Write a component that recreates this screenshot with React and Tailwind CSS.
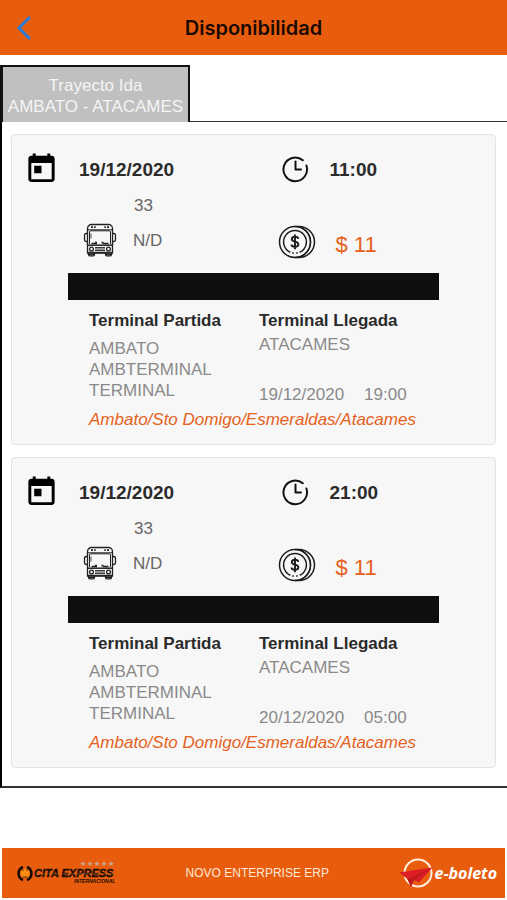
import React from "react";

const trips = [
  {
    id: 1,
    date: "19/12/2020",
    time: "11:00",
    seats: "33",
    bus: "N/D",
    price: "$ 11",
    from: "AMBATO AMBTERMINAL TERMINAL",
    to: "ATACAMES",
    arrivalDate: "19/12/2020",
    arrivalTime: "19:00",
    route: "Ambato/Sto Domigo/Esmeraldas/Atacames",
  },
  {
    id: 2,
    date: "19/12/2020",
    time: "21:00",
    seats: "33",
    bus: "N/D",
    price: "$ 11",
    from: "AMBATO AMBTERMINAL TERMINAL",
    to: "ATACAMES",
    arrivalDate: "20/12/2020",
    arrivalTime: "05:00",
    route: "Ambato/Sto Domigo/Esmeraldas/Atacames",
  },
];

function CalendarIcon() {
  return (
    <svg viewBox="0 0 24 24" className="h-[35px] w-[35px] shrink-0" fill="#000">
      <path d="M19 2.500h-1V1h-2v1.500H8V1H6v1.500H5c-1.100 0-2 .9-2 2V18.500c0 1.100.9 2 2 2h14c1.100 0 2-.9 2-2V4.500c0-1.100-.9-2-2-2zm0 16.200H5V7.500h14v11.200zM7 9.500h5v5H7z" />
    </svg>
  );
}

function ClockIcon() {
  return (
    <svg
      viewBox="0 0 28 28"
      className="h-7 w-7 shrink-0"
      fill="none"
      stroke="#111"
      strokeWidth="2"
      strokeLinecap="round"
    >
      <path d="M20.800 5.300A11.800 11.800 0 1 0 24.400 10.500" />
      <path d="M13.500 6.500v8H19" strokeLinejoin="round" />
    </svg>
  );
}

function BusIcon() {
  return (
    <svg
      viewBox="0 0 34 34"
      className="h-[34px] w-[34px] shrink-0"
      fill="none"
      stroke="#222"
      strokeWidth="1.300"
    >
      <path d="M4.500 30V5.500a4 4 0 0 1 4-4h17a4 4 0 0 1 4 4V30z" />
      <path d="M4.500 6.800h25M6.500 21V9q0-1.200 1.200-1.200h18.600q1.200 0 1.200 1.200v12" strokeWidth="1" />
      <path d="M8 4.200h2M11.200 4.200h1.500M21.300 4.200h1.500M24 4.200h2" strokeWidth="1.800" />
      <path d="M4.500 10.500H3.200q-1.700 0-1.700 1.700v4.600q0 1.700 1.700 1.700h1.300M29.500 10.500h1.300q1.700 0 1.700 1.700v4.600q0 1.700-1.700 1.700h-1.300" />
      <path d="M8 10.500v5" strokeWidth=".8" />
      <path d="M4.500 22.200h25" strokeWidth="1.500" />
      <path d="M8.500 20.500h5.500M12 19.600h2M18.500 19.600h2M20 20.500h5.500" strokeWidth="1.700" />
      <circle cx="8.500" cy="26" r="1.900" />
      <circle cx="25.500" cy="26" r="1.900" />
      <path d="M12 24.500h10M12 26h10M12 27.500h10" strokeWidth=".9" />
      <path d="M4.500 29.500h25" strokeWidth="1.500" />
      <path d="M5.500 30v1.500q0 1.300 1.300 1.300h3.400q1.300 0 1.300-1.300V30M22.500 30v1.500q0 1.300 1.300 1.300h3.400q1.300 0 1.300-1.300V30M6 31.300h5M23 31.300h5" />
    </svg>
  );
}

function CoinIcon() {
  return (
    <svg
      viewBox="0 0 38 34"
      className="h-[34px] w-[38px] shrink-0"
      fill="none"
      stroke="#1c1c1c"
      strokeWidth="1.500"
    >
      <circle cx="17" cy="17" r="15.500" />
      <path d="M12.300 27.300A11.400 11.400 0 1 1 21.700 27.300M14.200 28.100h1.600M18.200 28.100h1.600" />
      <path d="M17 1.500h4a15.500 15.500 0 0 1 0 31h-4" />
      <path d="M20 1.700a15.600 15.600 0 0 1 0 30.600" strokeWidth="1.300" />
      <path
        d="M20.300 13.800q-.3-2-3.300-2t-3.200 2.300q0 2 3.200 2.500t3.400 2.700q0 2.500-3.400 2.500t-3.500-2.300M17 9.500v14.700"
        strokeWidth="1.900"
      />
    </svg>
  );
}

function CitaExpressLogo() {
  return (
    <svg viewBox="0 0 99 28" className="h-7 w-[99px]" role="img" aria-label="Cita Express Internacional">
      <path d="M6 8a7 7 0 0 0 0 13M10 8a7 7 0 0 1 0 13" fill="none" stroke="#1a0d05" strokeWidth="2.600" />
      <circle cx="8" cy="14.500" r="4.600" fill="#fb8c12" />
      <path d="M5 10.500l1.500 1M11 10.500l-1.500 1M6 18h4" stroke="#3a1a08" strokeWidth="1" />
      <g fill="#cfa48c">
        <path d="M66 2l.8 1.700 1.900.2-1.400 1.300.4 1.900-1.700-1-1.700 1 .4-1.900-1.400-1.300 1.900-.2z" />
        <path d="M73 2l.8 1.700 1.900.2-1.400 1.300.4 1.900-1.700-1-1.700 1 .4-1.900-1.400-1.300 1.900-.2z" />
        <path d="M80 2l.8 1.700 1.900.2-1.400 1.300.4 1.900-1.700-1-1.700 1 .4-1.900-1.400-1.300 1.900-.2z" />
        <path d="M87 2l.8 1.700 1.900.2-1.400 1.300.4 1.900-1.700-1-1.700 1 .4-1.900-1.400-1.300 1.900-.2z" />
        <path d="M94 2l.8 1.700 1.900.2-1.400 1.300.4 1.900-1.700-1-1.700 1 .4-1.900-1.400-1.300 1.900-.2z" />
      </g>
      <text
        x="17"
        y="18"
        fontFamily="Liberation Sans, sans-serif"
        fontSize="11"
        fontWeight="bold"
        fontStyle="italic"
        fill="#1a0d05"
        stroke="#1a0d05"
        strokeWidth=".4"
      >
        CITA EXPRESS
      </text>
      <path d="M17 14.800h25M46 14.800h51" stroke="#c9703c" strokeWidth=".5" />
      <text
        x="57"
        y="24"
        fontFamily="Liberation Sans, sans-serif"
        fontSize="5"
        fontWeight="bold"
        fontStyle="italic"
        fill="#1a0d05"
      >
        INTERNACIONAL
      </text>
    </svg>
  );
}

function EBoletoLogo() {
  return (
    <div className="flex items-center">
      <svg viewBox="0 0 36 32" className="h-8 w-9">
        <circle cx="20" cy="16" r="13.500" fill="none" stroke="#fff0e0" strokeWidth="2" />
        <path d="M1 15.500L34.500 10.500 21 25.500l-5-2.500-3 7-3.500-8z" fill="#dc1f26" />
        <path d="M34.500 10.500L9.500 22l3.500 8 3-7z" fill="#c2181f" />
      </svg>
      <span className="font-['Open_Sans',sans-serif] text-[16px] leading-5 font-bold text-white italic">
        e-boleto
      </span>
    </div>
  );
}

function TripCard({ trip }) {
  return (
    <article className="rounded border border-[#e3e3e3] bg-[#f7f7f7] pt-4 pb-[14px]">
      <div className="grid grid-cols-2">
        <div className="flex h-9 items-center gap-5 pl-3 text-[19px] font-bold text-[#2b2b2b]">
          <CalendarIcon />
          <span>{trip.date}</span>
        </div>
        <div className="flex h-9 items-center gap-5 pl-7 text-[19px] font-bold text-[#2b2b2b]">
          <ClockIcon />
          <span>{trip.time}</span>
        </div>
        <div className="mt-2 pl-[122px] text-[#666]">{trip.seats}</div>
        <div className="col-start-1 mt-1.5 flex h-9 items-center gap-4 pl-[71px] text-[#666]">
          <BusIcon />
          <span>{trip.bus}</span>
        </div>
        <div className="mt-2 flex h-9 items-center gap-5 pl-6 text-[22px] text-[#e5611b]">
          <CoinIcon />
          <span className="pt-1">{trip.price}</span>
        </div>
      </div>

      <div className="mx-14 mt-[13px] h-[27px] bg-[#0e0e0e]" />

      <div className="mt-2.5 grid grid-cols-[170px_1fr] pl-[77px] text-[#8a8a8a]">
        <div>
          <h2 className="font-bold text-[#2b2b2b]">Terminal Partida</h2>
          <p className="mt-[7px] w-[130px]">{trip.from}</p>
        </div>
        <div className="flex flex-col">
          <h2 className="font-bold text-[#2b2b2b]">Terminal Llegada</h2>
          <p className="mt-[3px]">{trip.to}</p>
          <p className="mt-[29px] flex gap-5">
            <span>{trip.arrivalDate}</span>
            <span>{trip.arrivalTime}</span>
          </p>
        </div>
      </div>
      <p className="mt-1 pl-[77px] text-[#e5611b] italic">{trip.route}</p>
    </article>
  );
}

export default function App() {
  return (
    <div className="flex min-h-screen flex-col bg-white font-['Liberation_Sans',Arial,sans-serif] text-[17px] leading-[21px]">
      <header className="grid h-[55px] grid-cols-[60px_1fr_60px] items-center bg-[#e85c0d]">
        <button type="button" aria-label="Volver" className="pl-4">
          <svg
            viewBox="0 0 16 26"
            className="h-[26px] w-4"
            fill="none"
            stroke="#2c7bd6"
            strokeWidth="3"
          >
            <path d="M14 2L3 13l11 11" />
          </svg>
        </button>
        <h1 className="text-center font-[Inter,sans-serif] text-xl font-semibold text-[#1a0a02]">
          Disponibilidad
        </h1>
      </header>

      <main className="mt-2.5">
        <button
          type="button"
          className="relative -mb-px block h-[57px] w-[190px] border-t-2 border-r-2 border-l-3 border-[#111] bg-[#c0c0c0] pt-0.5 text-center whitespace-nowrap text-[#f5f5f5]"
        >
          Trayecto Ida
          <br />
          AMBATO - ATACAMES
        </button>
        <section className="flex flex-col gap-3 border-t border-b-2 border-l-2 border-[#333] border-l-black pt-3 pr-[11px] pb-[18px] pl-[9px]">
          {trips.map((trip) => {
            return <TripCard key={trip.id} trip={trip} />;
          })}
        </section>
      </main>

      <footer className="mx-0.5 mt-auto mb-0.5 flex h-[50px] items-center justify-between bg-[#e85c0d] pr-2 pl-[15px]">
        <CitaExpressLogo />
        <span className="text-xs text-[#fde8d8]">NOVO ENTERPRISE ERP</span>
        <EBoletoLogo />
      </footer>
    </div>
  );
}
